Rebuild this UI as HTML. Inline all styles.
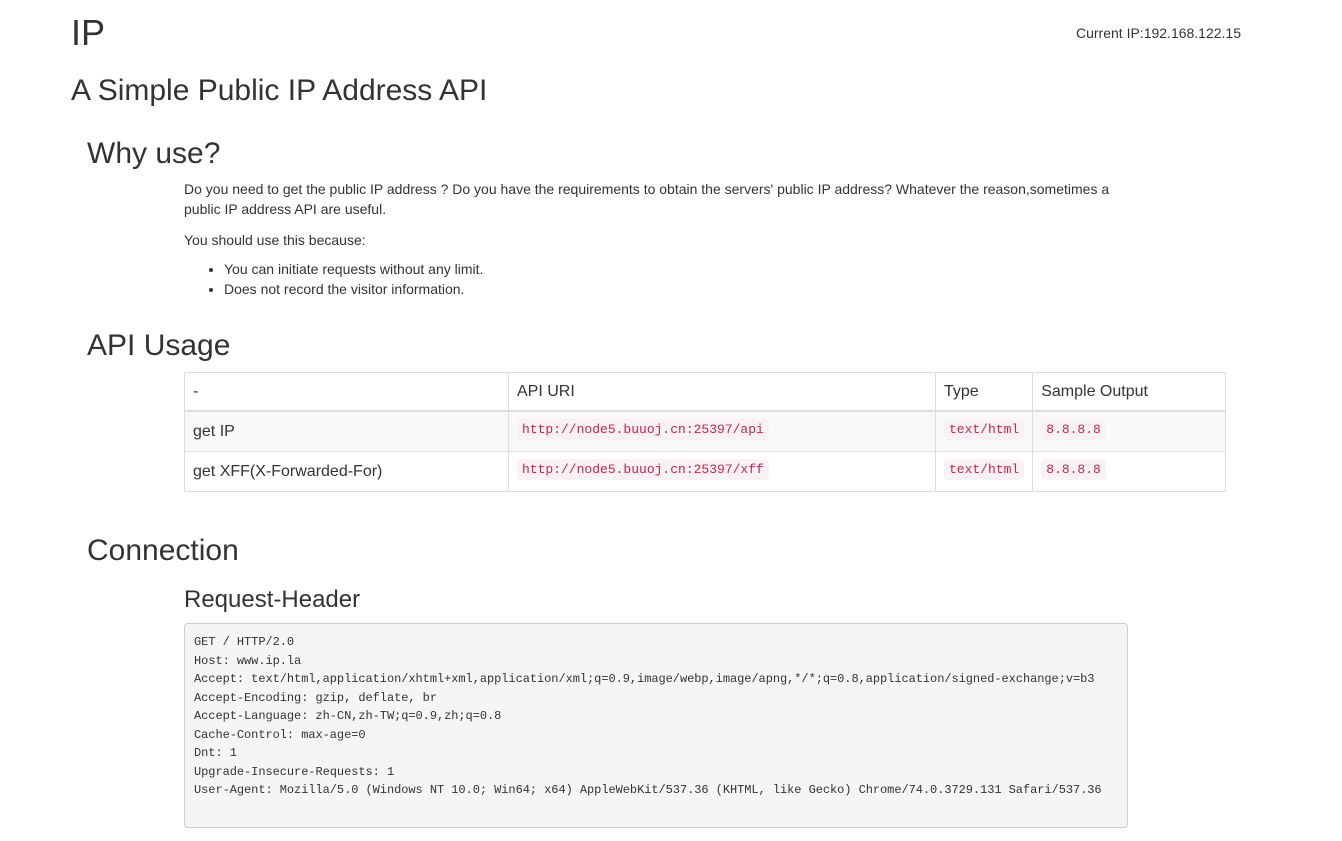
<!DOCTYPE html>
<html><head><meta charset="utf-8"><style>
body{margin:0;background:#fff;color:#333;font-family:"Liberation Sans",Arial,sans-serif;font-size:14px;width:1342px;height:841px;position:relative;overflow:hidden}
.a{position:absolute;white-space:nowrap;line-height:1}
table{position:absolute;left:184px;top:372px;width:1042px;border-collapse:collapse;font-size:16px}
td{border:1px solid #ddd;padding:0 8px;height:39px;vertical-align:middle;line-height:20px}
tr.h td{border-bottom:2px solid #ddd;height:37px}
tr.s td{background:#f9f9f9}
code{font-family:"Liberation Mono",monospace;font-size:13px;color:#c7254e;background:#f9f2f4;padding:3px 5px;border-radius:4px;position:relative;top:-2px}
pre{position:absolute;left:184px;top:623px;width:924px;height:185px;margin:0;padding:9px;background:#f5f5f5;border:1px solid #ccc;border-radius:4px;font-family:"Liberation Mono",monospace;font-size:12px;line-height:18.5px;color:#333;letter-spacing:-0.055px}
ul{position:absolute;left:184px;top:259px;margin:0;padding-left:40px;line-height:20px}
</style></head><body>
<div class="a" style="left:71px;top:15px;font-size:36px">IP</div>
<div class="a" style="left:1076px;top:26px;font-size:14px">Current IP:192.168.122.15</div>
<div class="a" style="left:71px;top:76px;font-size:30px">A Simple Public IP Address API</div>
<div class="a" style="left:87px;top:139px;font-size:30px">Why use?</div>
<div style="position:absolute;left:184px;top:179px;width:940px;line-height:20px">Do you need to get the public IP address ? Do you have the requirements to obtain the servers' public IP address? Whatever the reason,sometimes a public IP address API are useful.</div>
<div class="a" style="left:184px;top:233px">You should use this because:</div>
<ul><li>You can initiate requests without any limit.</li><li>Does not record the visitor information.</li></ul>
<div class="a" style="left:87px;top:331px;font-size:30px">API Usage</div>
<table>
<tr class="h"><td style="width:307px">-</td><td style="width:410px">API URI</td><td style="width:76px">Type</td><td>Sample Output</td></tr>
<tr class="s"><td>get IP</td><td><code>http://node5.buuoj.cn:25397/api</code></td><td><code>text/html</code></td><td><code>8.8.8.8</code></td></tr>
<tr><td>get XFF(X-Forwarded-For)</td><td><code>http://node5.buuoj.cn:25397/xff</code></td><td><code>text/html</code></td><td><code>8.8.8.8</code></td></tr>
</table>
<div class="a" style="left:87px;top:536px;font-size:30px">Connection</div>
<div class="a" style="left:184px;top:588px;font-size:24px">Request-Header</div>
<pre>GET / HTTP/2.0
Host: www.ip.la
Accept: text/html,application/xhtml+xml,application/xml;q=0.9,image/webp,image/apng,*/*;q=0.8,application/signed-exchange;v=b3
Accept-Encoding: gzip, deflate, br
Accept-Language: zh-CN,zh-TW;q=0.9,zh;q=0.8
Cache-Control: max-age=0
Dnt: 1
Upgrade-Insecure-Requests: 1
User-Agent: Mozilla/5.0 (Windows NT 10.0; Win64; x64) AppleWebKit/537.36 (KHTML, like Gecko) Chrome/74.0.3729.131 Safari/537.36</pre>
</body></html>
